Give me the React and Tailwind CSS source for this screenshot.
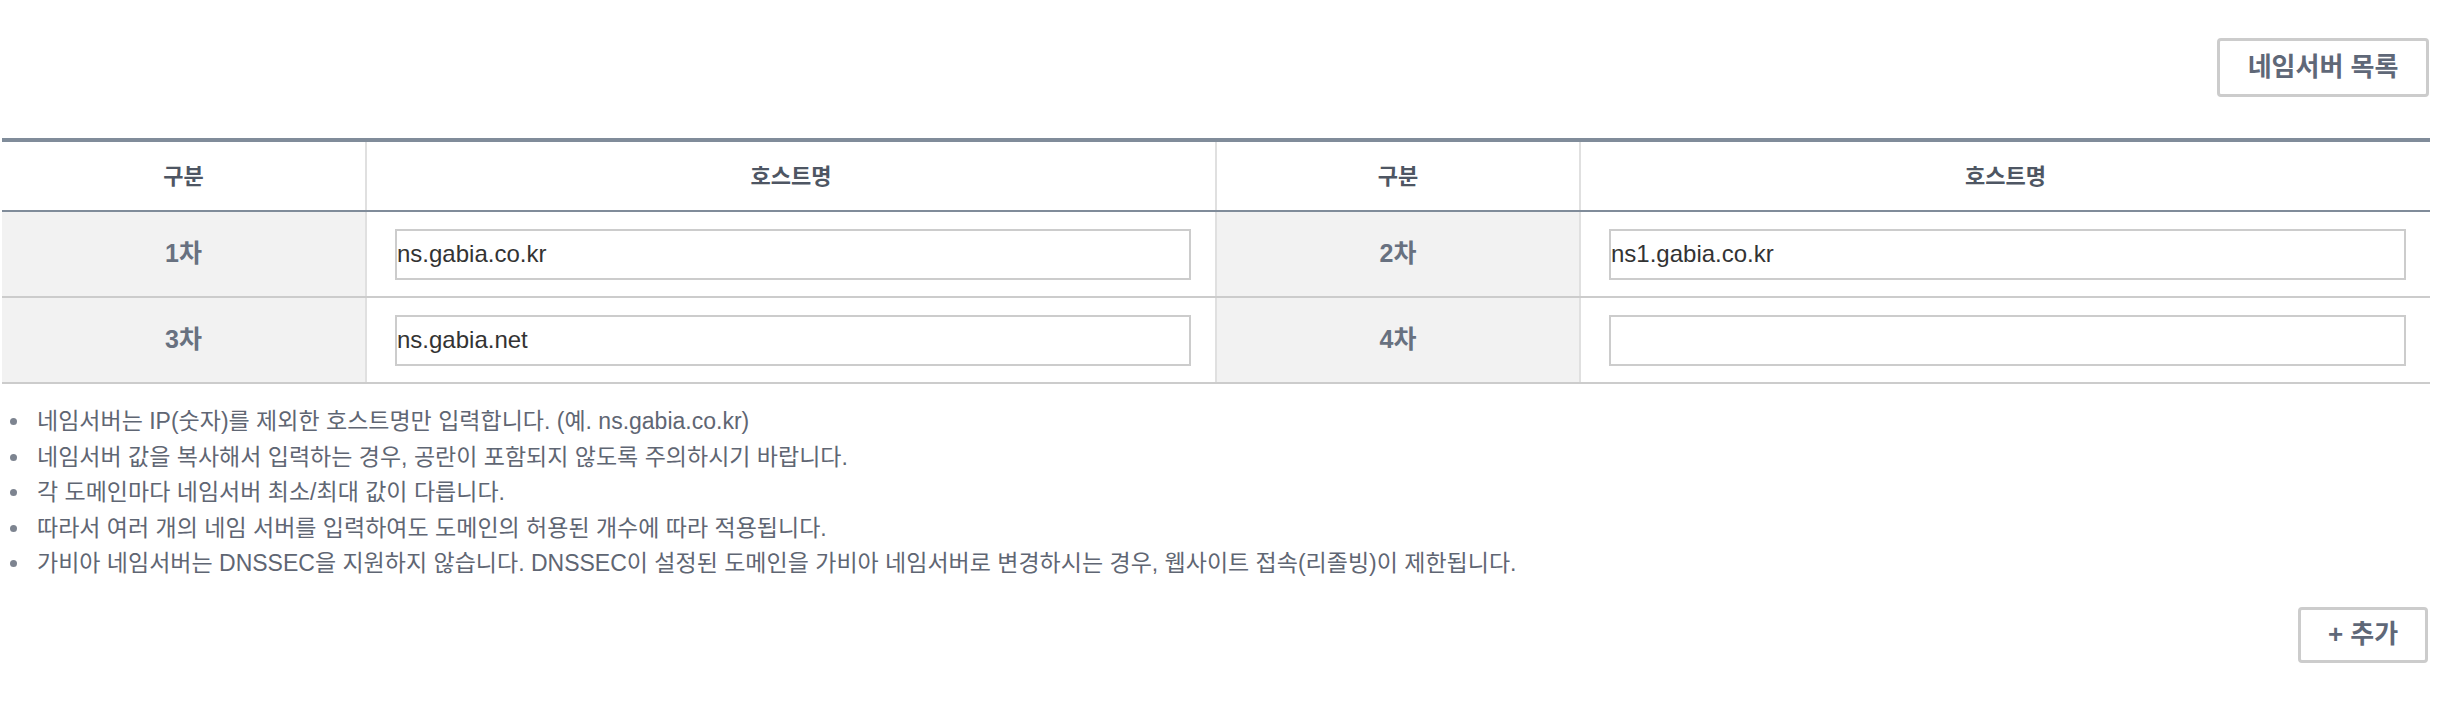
import React from "react";

const FONT = { fontFamily: '"Liberation Sans", "Noto Sans CJK KR", sans-serif' };

function LabelCell({ children, first }) {
  return (
    <div
      className={`flex items-center justify-center bg-[#f2f2f2] text-[25px] font-bold text-[#687180] ${
        first ? "" : "border-l-2 border-[#e0e0e0]"
      }`}
    >
      {children}
    </div>
  );
}

function InputCell({ value }) {
  return (
    <div className="flex items-center border-l-2 border-[#e0e0e0] bg-white pl-[28px] pr-[24px]">
      <input
        readOnly
        value={value}
        className="h-[51px] w-full border-2 border-[#cccccc] bg-white px-0 text-[24px] text-[#333333] outline-none"
        style={FONT}
      />
    </div>
  );
}

const notes = [
  "네임서버는 IP(숫자)를 제외한 호스트명만 입력합니다. (예. ns.gabia.co.kr)",
  "네임서버 값을 복사해서 입력하는 경우, 공란이 포함되지 않도록 주의하시기 바랍니다.",
  "각 도메인마다 네임서버 최소/최대 값이 다릅니다.",
  "따라서 여러 개의 네임 서버를 입력하여도 도메인의 허용된 개수에 따라 적용됩니다.",
  "가비아 네임서버는 DNSSEC을 지원하지 않습니다. DNSSEC이 설정된 도메인을 가비아 네임서버로 변경하시는 경우, 웹사이트 접속(리졸빙)이 제한됩니다.",
];

export default function App() {
  const cols = "grid grid-cols-[363px_850px_364px_851px]";
  return (
    <div className="h-[710px] w-[2458px] overflow-hidden bg-white" style={FONT}>
      <div className="flex justify-end pr-[29px] pt-[38px]">
        <button className="flex h-[59px] w-[212px] items-center justify-center rounded-[4px] border-[3px] border-[#cccccc] bg-white text-[26px] font-bold text-[#5f6878]">
          네임서버 목록
        </button>
      </div>

      <div className="ml-[2px] mt-[41px] w-[2428px] border-t-4 border-[#808c9a]">
        <div className={`${cols} h-[70px] border-b-2 border-[#808c9a] text-[22px] font-bold text-[#4e5663]`}>
          <div className="flex items-center justify-center">구분</div>
          <div className="flex items-center justify-center border-l-2 border-[#e0e0e0]">호스트명</div>
          <div className="flex items-center justify-center border-l-2 border-[#e0e0e0]">구분</div>
          <div className="flex items-center justify-center border-l-2 border-[#e0e0e0]">호스트명</div>
        </div>
        <div className={`${cols} h-[86px] border-b-2 border-[#cccccc]`}>
          <LabelCell first>1차</LabelCell>
          <InputCell value="ns.gabia.co.kr" />
          <LabelCell>2차</LabelCell>
          <InputCell value="ns1.gabia.co.kr" />
        </div>
        <div className={`${cols} h-[86px] border-b-2 border-[#cccccc]`}>
          <LabelCell first>3차</LabelCell>
          <InputCell value="ns.gabia.net" />
          <LabelCell>4차</LabelCell>
          <InputCell value="" />
        </div>
      </div>

      <ul className="pt-[20px] text-[23px] leading-[35.5px] text-[#5f6673]">
        {notes.map((n, i) => (
          <li key={i} className="flex items-center">
            <span className="ml-[10px] mr-[20px] h-[7px] w-[7px] shrink-0 rounded-full bg-[#7d8490]" />
            <span>{n}</span>
          </li>
        ))}
      </ul>

      <div className="flex justify-end pr-[30px] pt-[25px]">
        <button className="flex h-[56px] w-[130px] items-center justify-center rounded-[4px] border-[3px] border-[#cccccc] bg-white text-[26px] font-bold text-[#5f6878]">
          + 추가
        </button>
      </div>
    </div>
  );
}
